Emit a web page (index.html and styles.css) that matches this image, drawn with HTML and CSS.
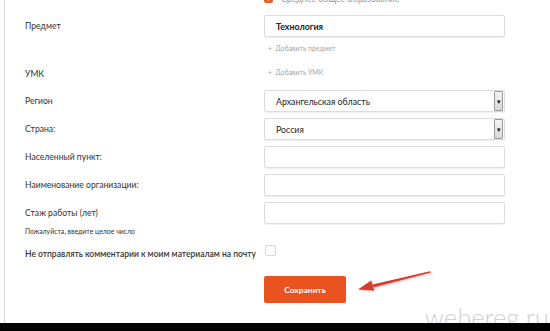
FILE: index.html
```html
<!DOCTYPE html>
<html lang="ru">
<head>
  <meta charset="UTF-8" />
  <meta name="viewport" content="width=device-width, initial-scale=1.0" />
  <title>Профиль – редактирование</title>
  <link rel="stylesheet" href="styles.css">
</head>
<body>
  <div class="page">
    <form class="profile-form">
      <div class="row row-edu">
        <span></span>
        <label class="check-line">
          <span class="check checked">
            <svg viewBox="0 0 10 10" width="8" height="8"><path d="M2 5.2 L4.2 7.3 L8 2.8" fill="none" stroke="#fff" stroke-width="1.6"/></svg>
          </span>
          <span class="check-text">Среднее общее образование</span>
        </label>
      </div>

      <div class="row">
        <label class="label">Предмет</label>
        <div class="field"><span class="value bold">Технология</span></div>
      </div>
      <div class="row row-link">
        <span></span>
        <a class="add-link">+&nbsp; Добавить предмет</a>
      </div>

      <div class="row row-umk">
        <label class="label">УМК</label>
        <a class="add-link">+&nbsp; Добавить УМК</a>
      </div>

      <div class="row">
        <label class="label">Регион</label>
        <div class="field select"><span class="value">Архангельская область</span><span class="drop">▾</span></div>
      </div>
      <div class="row">
        <label class="label">Страна:</label>
        <div class="field select"><span class="value">Россия</span><span class="drop">▾</span></div>
      </div>
      <div class="row">
        <label class="label">Населенный пункт:</label>
        <div class="field"></div>
      </div>
      <div class="row">
        <label class="label">Наименование организации:</label>
        <div class="field"></div>
      </div>
      <div class="row">
        <label class="label">Стаж работы (лет)</label>
        <div class="field"></div>
      </div>
      <div class="hint">Пожалуйста, введите целое число</div>

      <div class="row row-mail">
        <label class="label strong">Не отправлять комментарии к моим материалам на почту</label>
        <span class="check"></span>
      </div>

      <div class="row row-save">
        <span></span>
        <div><button type="button" class="btn-save">Сохранить</button></div>
      </div>
    </form>

    <svg class="arrow" viewBox="0 0 80 30" width="80" height="30">
      <polygon points="76,5.2 77,6.6 19.8,21.3 18.6,18.4" fill="#d8392b"/>
      <polygon points="4,23.4 17.2,14.6 20.2,24.6" fill="#d8392b"/>
    </svg>
    <div class="watermark">webereg.ru</div>
  </div>
  <div class="bottom-bar"></div>
</body>
</html>
```

FILE: styles.css
```css
body {
  margin: 0;
  background: #fff;
  font-family: 'Lato', 'Open Sans', sans-serif;
  color: #333;
  overflow: hidden;
}
.page {
  position: relative;
  height: 323px;
  margin-left: 4px;
  border-left: 1px solid #d4d4d4;
  overflow: hidden;
}
.profile-form {
  display: flex;
  flex-direction: column;
  padding-left: 20px;
  margin-top: -7px;
}
.row {
  display: grid;
  grid-template-columns: 239px 241px;
  align-items: center;
  margin-bottom: 6px;
}
.label {
  font-size: 8.6px;
  color: #333;
  white-space: nowrap;
}
.label.strong {
  font-size: 8.5px;
  font-weight: 600;
  color: #333;
}
.field {
  height: 22px;
  box-sizing: border-box;
  border: 1px solid #dcdcdc;
  border-radius: 2px;
  box-shadow: 0 1px 1px rgba(0, 0, 0, 0.06);
  display: flex;
  align-items: center;
  padding-left: 11px;
  background: #fff;
}
.value {
  font-size: 8.8px;
  color: #222;
}
.value.bold {
  font-weight: 700;
}
.select {
  justify-content: space-between;
}
.drop {
  width: 9px;
  height: 20px;
  box-sizing: border-box;
  border: 1px solid #9a9a9a;
  border-radius: 1px;
  background: linear-gradient(#f4f4f4, #d8d8d8);
  font-size: 7px;
  color: #111;
  display: flex;
  align-items: center;
  justify-content: center;
  margin-right: 1px;
}
.row-edu {
  margin-bottom: 12px;
}
.check-line {
  display: flex;
  align-items: center;
  gap: 8px;
  height: 10px;
}
.check {
  width: 10px;
  height: 10px;
  box-sizing: border-box;
  border: 1px solid #d6d6d6;
  border-radius: 2px;
  background: #fff;
  display: flex;
  align-items: center;
  justify-content: center;
}
.check.checked {
  width: 9px;
  height: 9px;
  border: none;
  background: #ea5b2b;
}
.check-text {
  font-size: 8.8px;
  color: #9a9a9a;
}
.row-link {
  margin-top: -1px;
  margin-bottom: 0;
  height: 12px;
}
.add-link {
  font-size: 6.9px;
  color: #a6a6a6;
  padding-left: 4px;
}
.row-umk {
  margin-top: 11px;
  margin-bottom: 11px;
  height: 14px;
}
.row-umk .label {
  padding-top: 3px;
}
.hint {
  font-size: 6.9px;
  color: #333;
  margin-top: -4px;
  height: 10px;
  line-height: 10px;
}
.row-mail {
  align-items: start;
  margin-top: 9px;
}
.row-mail .label {
  padding-top: 4px;
}
.row-mail .check {
  width: 11px;
  height: 11px;
  margin-left: 1px;
}
.row-save {
  margin-top: 11px;
}
.btn-save {
  width: 82px;
  height: 27px;
  border: none;
  border-radius: 2px;
  background: #e9531f;
  color: #fff;
  font-family: 'Lato', sans-serif;
  font-weight: 700;
  font-size: 8.4px;
  padding: 0;
}
.arrow {
  position: absolute;
  left: 349px;
  top: 266px;
  filter: drop-shadow(1px 1px 1px rgba(0, 0, 0, 0.25));
}
.watermark {
  position: absolute;
  right: 1px;
  top: 302px;
  font-family: 'Lato', sans-serif;
  font-weight: 300;
  font-size: 25px;
  color: #d0d0d0;
  letter-spacing: 0.3px;
}
.bottom-bar {
  height: 8px;
  background: #000;
}
```
